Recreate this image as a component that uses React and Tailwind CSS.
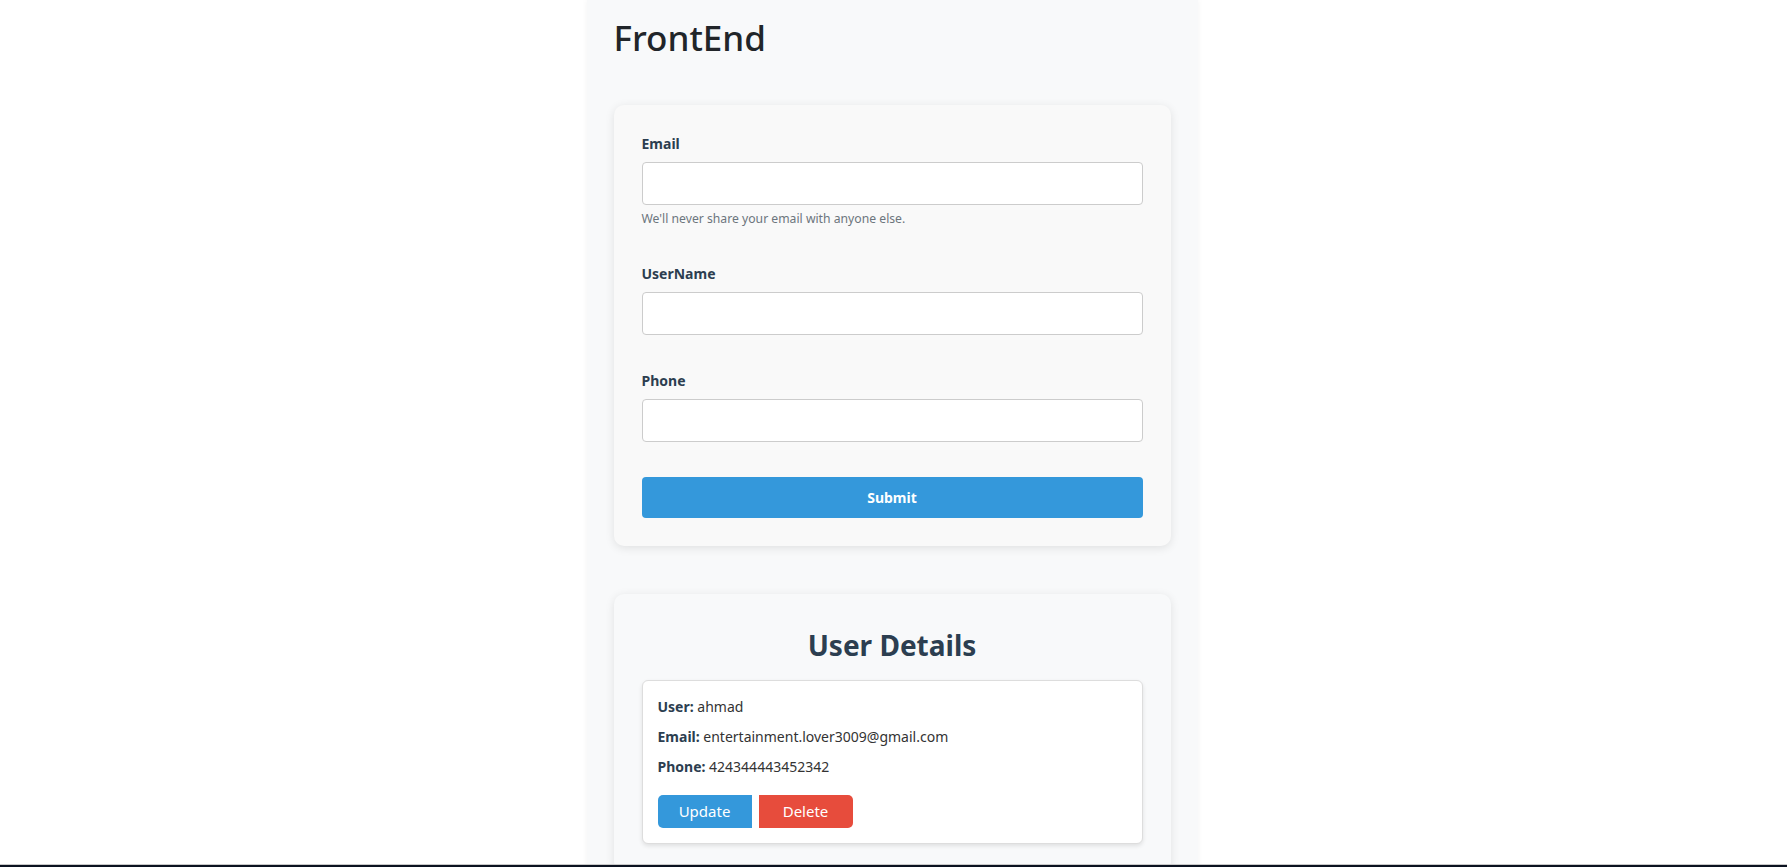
import React from 'react';

// Simple form + user details page
export default function App() {
  const user = {
    name: 'ahmad',
    email: 'entertainment.lover3009@gmail.com',
    phone: '424344443452342',
  };

  return (
    <div className="min-h-screen bg-white pr-[3px] font-['Segoe_UI','Noto_Sans',sans-serif] text-[#212529]">
      <div className="mx-auto min-h-screen w-[611px] bg-[#f8f9fa] px-[27px] shadow-[0_0_6px_rgba(0,0,0,0.05)]">
        <h1 className="pt-[15px] text-[35px] font-medium leading-[46px] text-[#212529]">FrontEnd</h1>

        {/* Form card */}
        <form className="mt-[44px] rounded-[10px] bg-[#f9f9f9] p-[28px] shadow-[0_2px_10px_rgba(0,0,0,0.1)]">
          <div className="mb-[35px]">
            <label className="mb-[8px] block text-[14px] font-bold leading-[21px] text-[#2c3e50]">Email</label>
            <input type="email" className="block h-[43px] w-full rounded-[4px] border border-[#ccc] bg-white px-3" />
            <p className="mt-[5px] text-[12.2px] leading-[18px] text-[#6c757d]">We'll never share your email with anyone else.</p>
          </div>
          <div className="mb-[35px]">
            <label className="mb-[8px] block text-[14px] font-bold leading-[21px] text-[#2c3e50]">UserName</label>
            <input type="text" className="block h-[43px] w-full rounded-[4px] border border-[#ccc] bg-white px-3" />
          </div>
          <div className="mb-[35px]">
            <label className="mb-[8px] block text-[14px] font-bold leading-[21px] text-[#2c3e50]">Phone</label>
            <input type="text" className="block h-[43px] w-full rounded-[4px] border border-[#ccc] bg-white px-3" />
          </div>
          <button type="button" className="block h-[41px] w-full rounded-[4px] bg-[#3498db] text-[14px] font-bold text-white">
            Submit
          </button>
        </form>

        {/* User details card */}
        <div className="mt-[48px] rounded-[10px] bg-[#f8f9fa] px-[28px] pb-[28px] pt-[32px] shadow-[0_2px_10px_rgba(0,0,0,0.1)]">
          <h2 className="mb-[16px] text-center text-[28px] font-bold leading-[38px] text-[#2c3e50]">User Details</h2>
          <div className="rounded-[6px] border border-[#ddd] bg-white p-[15px] shadow-[0_2px_4px_rgba(0,0,0,0.1)]">
            <p className="mb-[8px] text-[14px] leading-[22px] text-[#333]">
              <span className="font-bold text-[#2c3e50]">User:</span> {user.name}
            </p>
            <p className="mb-[8px] text-[14px] leading-[22px] text-[#333]">
              <span className="font-bold text-[#2c3e50]">Email:</span> {user.email}
            </p>
            <p className="text-[14px] leading-[22px] text-[#333]">
              <span className="font-bold text-[#2c3e50]">Phone:</span> {user.phone}
            </p>
            <div className="mt-[17px] flex gap-[7px]">
              <button type="button" className="h-[33px] w-[94px] rounded-l-[5px] bg-[#3498db] text-[15px] text-white">Update</button>
              <button type="button" className="h-[33px] w-[94px] rounded-r-[5px] bg-[#e74c3c] text-[15px] text-white">Delete</button>
            </div>
          </div>
        </div>
      </div>

      {/* bottom edge of the window */}
      <div className="fixed inset-x-0 bottom-0 h-[3px] border-t border-[#c8c8c8] bg-[#0b1220]" />
    </div>
  );
}
